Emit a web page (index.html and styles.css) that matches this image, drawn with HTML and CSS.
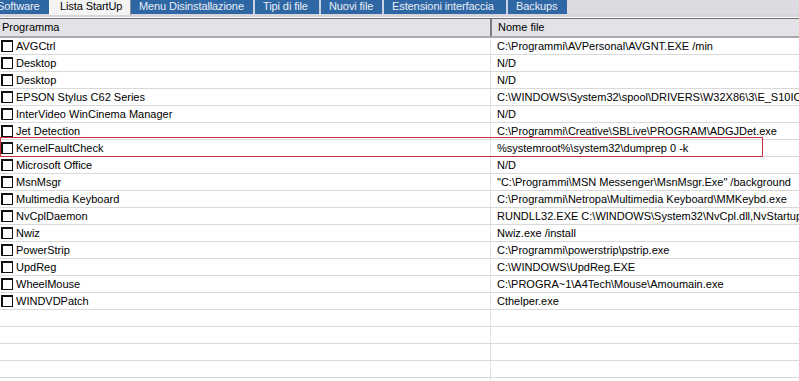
FILE: index.html
```html
<!DOCTYPE html>
<html lang="it">
<head>
  <meta charset="UTF-8">
  <title>Lista StartUp</title>
  <link rel="stylesheet" href="styles.css">
</head>
<body>
  <div class="tabs">
    <div class="tab tab-first">Software</div>
    <div class="tab active">Lista StartUp</div>
    <div class="tab tab-menu">Menu Disinstallazione</div>
    <div class="tab tab-tipi">Tipi di file</div>
    <div class="tab tab-nuovi">Nuovi file</div>
    <div class="tab tab-est">Estensioni interfaccia</div>
    <div class="tab tab-back">Backups</div>
  </div>
  <div class="strip"></div>

  <div class="list">
    <div class="head">
      <div class="col-a">Programma</div>
      <div class="col-b">Nome file</div>
    </div>
    <div id="rows"></div>
    <div class="mark"></div>
  </div>

  <script>
    const items = [
      ["AVGCtrl", "C:\\Programmi\\AVPersonal\\AVGNT.EXE /min"],
      ["Desktop", "N/D"],
      ["Desktop", "N/D"],
      ["EPSON Stylus C62 Series", "C:\\WINDOWS\\System32\\spool\\DRIVERS\\W32X86\\3\\E_S10ICM2.EXE"],
      ["InterVideo WinCinema Manager", "N/D"],
      ["Jet Detection", "C:\\Programmi\\Creative\\SBLive\\PROGRAM\\ADGJDet.exe"],
      ["KernelFaultCheck", "%systemroot%\\system32\\dumprep 0 -k"],
      ["Microsoft Office", "N/D"],
      ["MsnMsgr", "\"C:\\Programmi\\MSN Messenger\\MsnMsgr.Exe\" /background"],
      ["Multimedia Keyboard", "C:\\Programmi\\Netropa\\Multimedia Keyboard\\MMKeybd.exe"],
      ["NvCplDaemon", "RUNDLL32.EXE C:\\WINDOWS\\System32\\NvCpl.dll,NvStartup"],
      ["Nwiz", "Nwiz.exe /install"],
      ["PowerStrip", "C:\\Programmi\\powerstrip\\pstrip.exe"],
      ["UpdReg", "C:\\WINDOWS\\UpdReg.EXE"],
      ["WheelMouse", "C:\\PROGRA~1\\A4Tech\\Mouse\\Amoumain.exe"],
      ["WINDVDPatch", "Cthelper.exe"]
    ];

    const rows = document.getElementById("rows");

    items.forEach(item => {
      rows.insertAdjacentHTML("beforeend", `
        <div class="row">
          <div class="col-a"><span class="check"></span>${item[0]}</div>
          <div class="col-b">${item[1]}</div>
        </div>
      `);
    });

    for (let i = 0; i < 5; i++) {
      rows.insertAdjacentHTML("beforeend", `
        <div class="row">
          <div class="col-a"></div>
          <div class="col-b"></div>
        </div>
      `);
    }
  </script>
</body>
</html>
```

FILE: styles.css
```css
* {
  box-sizing: border-box;
}
body {
  margin: 0;
  width: 799px;
  height: 381px;
  overflow: hidden;
  background: #ffffff;
  font-family: "Liberation Sans", Arial, sans-serif;
  font-size: 11px;
  color: #000000;
}
.tabs {
  display: flex;
  height: 14px;
  background: #dcdbe0;
}
.tab {
  height: 14px;
  line-height: 13px;
  padding-left: 8px;
  background: #2f67a4;
  color: #e8eef6;
  border-left: 2px solid #c9d4e2;
  white-space: nowrap;
  letter-spacing: -0.1px;
  overflow: hidden;
}
.tab-first {
  width: 49px;
  padding-left: 0;
  border-left: none;
  text-indent: -3px;
}
.active {
  width: 82px;
  padding-left: 10px;
  height: 15px;
  background: #f4f4f4;
  color: #000000;
  border-left: 1px solid #ffffff;
  border-right: 1px solid #8c8c8c;
}
.tab-menu {
  width: 122px;
  border-left: none;
}
.tab-tipi {
  width: 66px;
}
.tab-nuovi {
  width: 63px;
}
.tab-est {
  width: 124px;
}
.tab-back {
  width: 61px;
}
.strip {
  height: 4px;
  background: #d6d5da;
  border-bottom: 1px solid #ffffff;
}
.list {
  position: relative;
}
.head {
  display: grid;
  grid-template-columns: 490px 1fr;
  height: 20px;
  background: #e3e2e7;
  border-top: 1px solid #6f6f6f;
  border-bottom: 2px solid #a8a8ac;
  line-height: 16px;
}
.head .col-a {
  padding-left: 2px;
}
.head .col-b {
  padding-left: 6px;
  border-left: 2px solid #7c7c80;
}
.row {
  display: grid;
  grid-template-columns: 490px 1fr;
  height: 17px;
  border-bottom: 1px solid #d9d9d9;
  line-height: 16px;
}
.row .col-a {
  display: flex;
  align-items: center;
  gap: 3px;
  padding-left: 1px;
  white-space: nowrap;
}
.row .col-b {
  padding-left: 6px;
  border-left: 1px solid #e2e2e2;
  white-space: nowrap;
  overflow: hidden;
}
.check {
  width: 12px;
  height: 12px;
  border: 2px solid #111111;
  border-right-width: 1px;
  border-bottom-width: 1px;
  background: #ffffff;
}
.mark {
  position: absolute;
  left: 0;
  top: 119px;
  width: 763px;
  height: 20px;
  border: 1px solid #c8303c;
}
```
